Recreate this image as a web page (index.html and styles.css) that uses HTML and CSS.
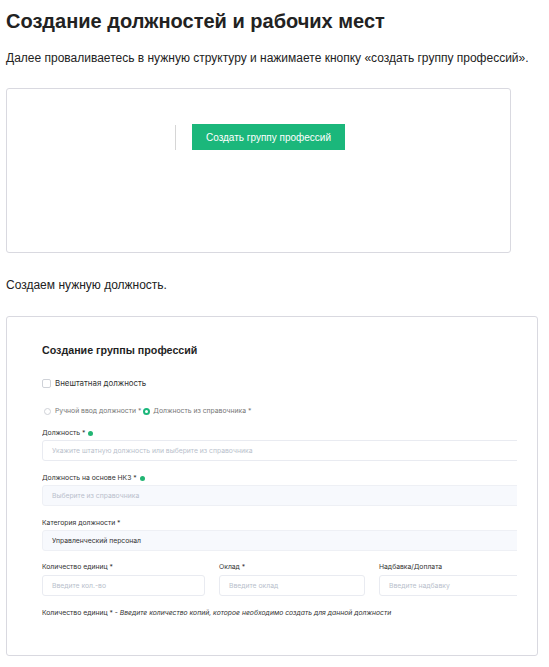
FILE: index.html
```html
<!DOCTYPE html>
<html lang="ru">
<head>
<meta charset="utf-8">
<title>Создание должностей и рабочих мест</title>
<link rel="stylesheet" href="styles.css">
</head>
<body>
<h1 class="page-title">Создание должностей и рабочих мест</h1>
<p class="text intro">Далее проваливаетесь в нужную структуру и нажимаете кнопку «создать группу профессий».</p>

<div class="card card-one">
  <div class="toolbar">
    <span class="divider"></span>
    <span class="btn-green">Создать группу профессий</span>
  </div>
</div>

<p class="text second">Создаем нужную должность.</p>

<div class="card card-two">
  <div class="form">
    <div class="form-title">Создание группы профессий</div>
    <div class="check-row"><span class="checkbox"></span><span>Внештатная должность</span></div>
    <div class="radio-row">
      <span class="radio"></span><span class="radio-label">Ручной ввод должности *</span>
      <span class="radio radio-on"></span><span class="radio-label">Должность из справочника *</span>
    </div>

    <div class="field first">
      <div class="label">Должность * <span class="dot"></span></div>
      <div class="input"><span class="ph">Укажите штатную должность или выберите из справочника</span></div>
    </div>
    <div class="field">
      <div class="label">Должность на основе НКЗ * <span class="dot"></span></div>
      <div class="input input-dis"><span class="ph">Выберите из справочника</span></div>
    </div>
    <div class="field">
      <div class="label">Категория должности *</div>
      <div class="input input-dis"><span class="val">Управленческий персонал</span></div>
    </div>

    <div class="field-row">
      <div class="field">
        <div class="label">Количество единиц *</div>
        <div class="input"><span class="ph">Введите кол.-во</span></div>
      </div>
      <div class="field">
        <div class="label">Оклад *</div>
        <div class="input"><span class="ph">Введите оклад</span></div>
      </div>
      <div class="field">
        <div class="label">Надбавка/Доплата</div>
        <div class="input"><span class="ph">Введите надбавку</span></div>
      </div>
    </div>

    <div class="note">Количество единиц * - <em>Введите количество копий, которое необходимо создать для данной должности</em></div>
  </div>
</div>
</body>
</html>
```

FILE: styles.css
```css
html, body {
  margin: 0;
  padding: 0;
  background: #ffffff;
}
body {
  padding: 8px 6px 0 6px;
  font-family: "Liberation Sans", Arial, sans-serif;
  color: #222222;
}
.page-title {
  margin: 0;
  font-size: 20px;
  line-height: 26px;
  font-weight: bold;
  color: #222222;
}
.text {
  margin: 0;
  font-size: 12px;
  line-height: 18px;
  color: #222222;
}
.intro {
  margin-top: 15px;
}
.card {
  border: 1px solid #d9d9e0;
  border-radius: 3px;
  box-sizing: border-box;
  background: #fff;
}
.card-one {
  margin-top: 21px;
  width: 505px;
  height: 165px;
  padding: 35px 0 0 168px;
}
.toolbar {
  display: flex;
  align-items: flex-start;
  gap: 16px;
}
.divider {
  width: 1px;
  height: 25px;
  margin-top: 1px;
  background: #d6d6d6;
}
.btn-green {
  width: 153px;
  height: 26px;
  background: #1bb77b;
  color: #ffffff;
  font-size: 10px;
  line-height: 28px;
  text-align: center;
}
.second {
  margin-top: 23px;
}
.card-two {
  margin-top: 22px;
  width: 532px;
  height: 340px;
  padding: 26px 0 0 35px;
}
.form {
  width: 475px;
  overflow: hidden;
  font-family: Inter, "Liberation Sans", sans-serif;
  color: #333;
}
.form-title {
  font-family: "Liberation Sans", Arial, sans-serif;
  font-weight: bold;
  font-size: 10.7px;
  line-height: 14px;
  color: #1f1f1f;
}
.check-row {
  margin-top: 20px;
  display: flex;
  align-items: center;
  gap: 4px;
  font-size: 7.9px;
  line-height: 12px;
  color: #333;
}
.checkbox {
  width: 7px;
  height: 7px;
  border: 1px solid #cfd2d8;
  border-radius: 2px;
}
.radio-row {
  margin-top: 17px;
  display: flex;
  align-items: center;
  font-size: 6.8px;
  line-height: 10px;
  color: #777;
  padding-left: 2px;
}
.radio {
  width: 5px;
  height: 5px;
  border: 1px solid #cfd2d8;
  border-radius: 50%;
  margin-right: 4px;
}
.radio-on {
  width: 3px;
  height: 3px;
  border: 2px solid #1bb77b;
  margin-left: 2px;
  margin-right: 3px;
}
.field {
  margin-top: 12px;
}
.field.first {
  margin-top: 12px;
}
.label {
  font-size: 6.8px;
  line-height: 10px;
  color: #333;
  margin-bottom: 2px;
  display: flex;
  align-items: center;
  gap: 2px;
}
.dot {
  width: 5px;
  height: 5px;
  margin-left: 1px;
  border-radius: 50%;
  background: #22b573;
}
.input {
  width: 490px;
  height: 21px;
  box-sizing: border-box;
  border: 1px solid #e9ebf1;
  border-radius: 3px;
  background: #fff;
  padding-left: 9px;
  display: flex;
  align-items: center;
  font-size: 6.8px;
}
.input-dis {
  background: #f7f9fd;
  border-color: #eef0f5;
}
.ph {
  color: #b9bfcc;
}
.val {
  color: #333;
}
.field-row {
  margin-top: 11px;
  display: grid;
  grid-template-columns: 163px 146px 160px;
  column-gap: 14px;
  width: 520px;
}
.field-row .field {
  margin-top: 0;
}
.field-row .label {
  margin-bottom: 3px;
}
.field-row .input {
  width: 100%;
}
.note {
  margin-top: 12px;
  font-size: 6.8px;
  line-height: 10px;
  color: #333;
}
.note em {
  font-style: italic;
}
```
